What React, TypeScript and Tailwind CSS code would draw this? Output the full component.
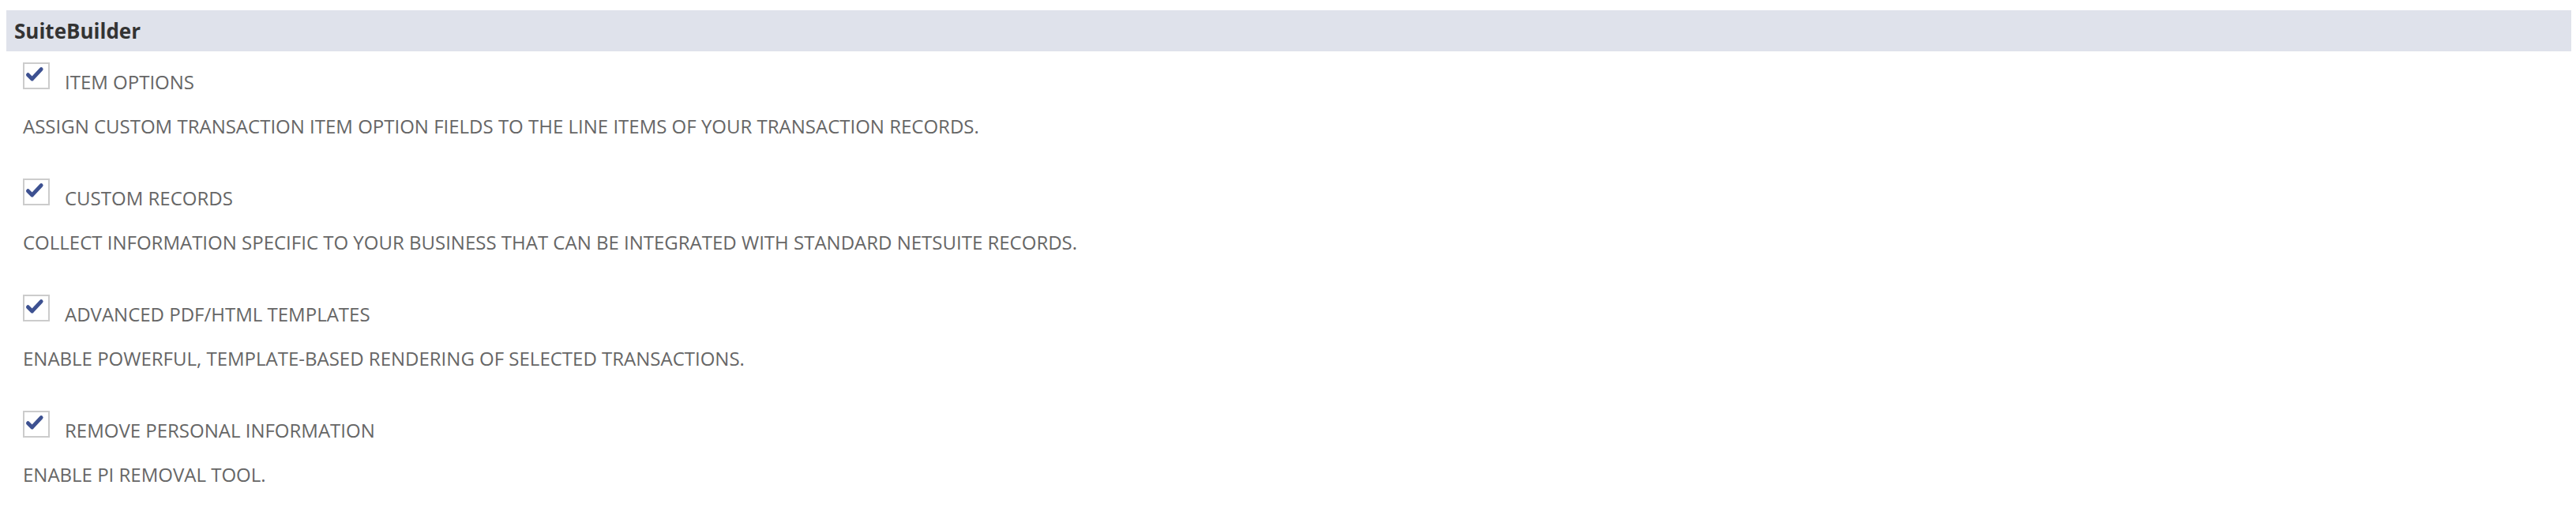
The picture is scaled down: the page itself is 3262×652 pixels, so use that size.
const features = [
  {
    label: 'ITEM OPTIONS',
    description:
      'ASSIGN CUSTOM TRANSACTION ITEM OPTION FIELDS TO THE LINE ITEMS OF YOUR TRANSACTION RECORDS.',
  },
  {
    label: 'CUSTOM RECORDS',
    description:
      'COLLECT INFORMATION SPECIFIC TO YOUR BUSINESS THAT CAN BE INTEGRATED WITH STANDARD NETSUITE RECORDS.',
  },
  {
    label: 'ADVANCED PDF/HTML TEMPLATES',
    description: 'ENABLE POWERFUL, TEMPLATE-BASED RENDERING OF SELECTED TRANSACTIONS.',
  },
  {
    label: 'REMOVE PERSONAL INFORMATION',
    description: 'ENABLE PI REMOVAL TOOL.',
  },
];

function CheckBox() {
  return (
    <span className="flex h-[34px] w-[34px] shrink-0 items-start justify-start border-2 border-[#cccccc] bg-white">
      <svg viewBox="0 0 34 34" className="h-[30px] w-[30px]">
        <path
          d="M5 15.5 L11 21.5 L24 7.5"
          fill="none"
          stroke="#3d5191"
          strokeWidth="5.5"
          strokeLinecap="round"
          strokeLinejoin="round"
        />
      </svg>
    </span>
  );
}

export default function App() {
  return (
    <div className="min-h-[652px] bg-white pt-[13px] pl-2 pr-[6px] font-['Open_Sans',sans-serif]">
      <div className="flex h-[52px] items-center bg-[#dfe2eb] pl-[10px] text-[26px] font-bold text-[#333333]">
        SuiteBuilder
      </div>

      <div className="pl-[21px] pt-[14px]">
        {features.map((f) => (
          <div key={f.label} className="h-[147px]">
            <div className="flex items-end">
              <CheckBox />
              <span className="mb-[-3px] ml-[19px] text-[24px] leading-[24px] text-[#666666]">
                {f.label}
              </span>
            </div>
            <p className="mt-[35px] text-[24px] leading-[24px] text-[#666666]">
              {f.description}
            </p>
          </div>
        ))}
      </div>
    </div>
  );
}
